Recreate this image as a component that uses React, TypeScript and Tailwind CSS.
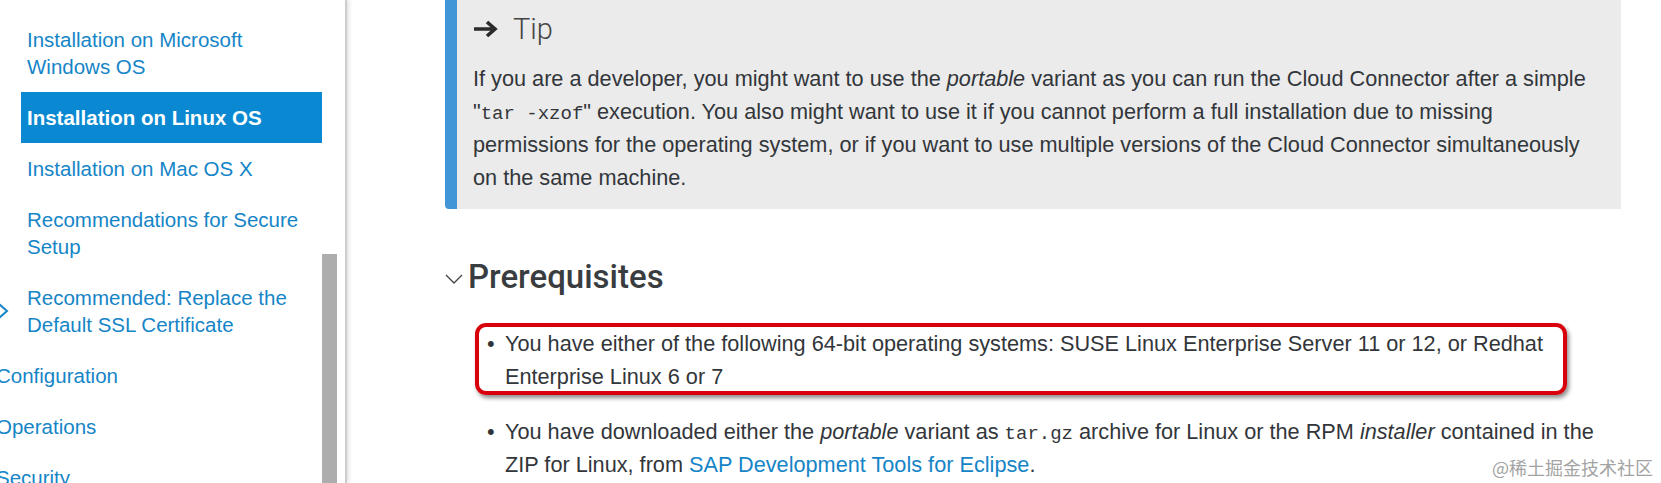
import React from "react";

const navItems = [
  { label: "Installation on Microsoft Windows OS", nested: true },
  { label: "Installation on Linux OS", nested: true, active: true },
  { label: "Installation on Mac OS X", nested: true },
  { label: "Recommendations for Secure Setup", nested: true },
  { label: "Recommended: Replace the Default SSL Certificate", nested: true, expandable: true },
  { label: "Configuration" },
  { label: "Operations" },
  { label: "Security" },
];

const Mono = ({ children }: { children: React.ReactNode }) => (
  <span className="font-['Liberation_Mono',monospace] text-[19px] leading-none">{children}</span>
);

const App = () => {
  return (
    <div className="flex h-[483px] w-[1661px] overflow-hidden bg-white font-['Liberation_Sans',Arial,sans-serif] relative">
      {/* sidebar */}
      <aside className="flex h-full w-[347px] shrink-0 border-r-2 border-[#cdcdcd] bg-white shadow-[2px_0_4px_rgba(0,0,0,0.12)]">
        <nav className="w-[322px] shrink-0 pt-[14px] text-[20.5px] leading-[27px] text-[#1585c7]">
          {navItems.map((item) =>
            item.nested ? (
              <div key={item.label} className="flex">
                <div className="flex w-[21px] shrink-0 items-center">
                  {item.expandable && (
                    <svg width="12" height="18" viewBox="0 0 12 18" className="-ml-[3px]">
                      <path d="M2 2 L10 9 L2 16" fill="none" stroke="#1585c7" strokeWidth="2" />
                    </svg>
                  )}
                </div>
                <div
                  className={
                    item.active
                      ? "flex-1 bg-[#0a89d2] py-[12px] pl-[6px] pr-[8px] font-bold text-white"
                      : "flex-1 py-[12px] pl-[6px] pr-[8px]"
                  }
                >
                  {item.label}
                </div>
              </div>
            ) : (
              <div key={item.label} className="-ml-[4px] py-[12px]">
                {item.label}
              </div>
            )
          )}
        </nav>
        <div className="flex w-[15px] shrink-0 flex-col">
          <div className="h-[254px]" />
          <div className="flex-1 bg-[#adadad]" />
        </div>
      </aside>

      {/* content */}
      <main className="flex-1 pl-[98px] text-[#32363a]">
        <div className="w-[1176px] rounded-bl-[4px] border-l-[12px] border-[#4196d8] bg-[#ebebeb] pl-[16px] pr-[4px] pt-[11px] pb-[15px]">
          <div className="flex items-center gap-[14px] text-[29px] leading-[36px]">
            <svg width="26" height="18" viewBox="0 0 26 18">
              <path d="M1 9 H22 M14 2 L22 9 L14 16" fill="none" stroke="#2b2b2b" strokeWidth="3.6" />
            </svg>
            <span className="font-['Roboto',sans-serif] font-light text-[#444]">Tip</span>
          </div>
          <p className="mt-[15px] whitespace-nowrap text-[21.7px] leading-[33px]">
            If you are a developer, you might want to use the <i>portable</i> variant as you can run the Cloud Connector after a simple
            <br />
            "<Mono>tar -xzof</Mono>" execution. You also might want to use it if you cannot perform a full installation due to missing
            <br />
            permissions for the operating system, or if you want to use multiple versions of the Cloud Connector simultaneously
            <br />
            on the same machine.
          </p>
        </div>

        <h2 className="mt-[48px] flex items-center font-['Roboto',sans-serif] text-[33px] font-medium leading-[40px] text-[#3a3d40]">
          <svg width="18" height="10" viewBox="0 0 18 10" className="mr-[5px] mt-[4px]">
            <path d="M1 1 L9 9 L17 1" fill="none" stroke="#444" strokeWidth="1.3" />
          </svg>
          Prerequisites
        </h2>

        <ul className="ml-[28px] mt-[30px] whitespace-nowrap text-[21.7px] leading-[33px]">
          <li className="relative flex">
            <span className="w-[32px] shrink-0 pl-[14px]">•</span>
            <span>
              You have either of the following 64-bit operating systems: SUSE Linux Enterprise Server 11 or 12, or Redhat
              <br />
              Enterprise Linux 6 or 7
            </span>
            <div className="absolute -top-[4px] -bottom-[2px] left-[2px] w-[1092px] rounded-[11px] border-[4px] border-[#d8000c] shadow-[2px_3px_4px_rgba(0,0,0,0.45)]" />
          </li>
          <li className="mt-[22px] flex">
            <span className="w-[32px] shrink-0 pl-[14px]">•</span>
            <span>
              You have downloaded either the <i>portable</i> variant as <Mono>tar.gz</Mono> archive for Linux or the RPM <i>installer</i> contained in the
              <br />
              ZIP for Linux, from <span className="text-[#1585c7]">SAP Development Tools for Eclipse</span>.
            </span>
          </li>
        </ul>
      </main>

      <div className="absolute bottom-[3px] right-[8px] font-['Noto_Sans_CJK_SC',sans-serif] text-[18px] leading-[26px] text-[#a3a3a3] [text-shadow:0_0_2px_#fff]">
        @稀土掘金技术社区
      </div>
    </div>
  );
};

export default App;
